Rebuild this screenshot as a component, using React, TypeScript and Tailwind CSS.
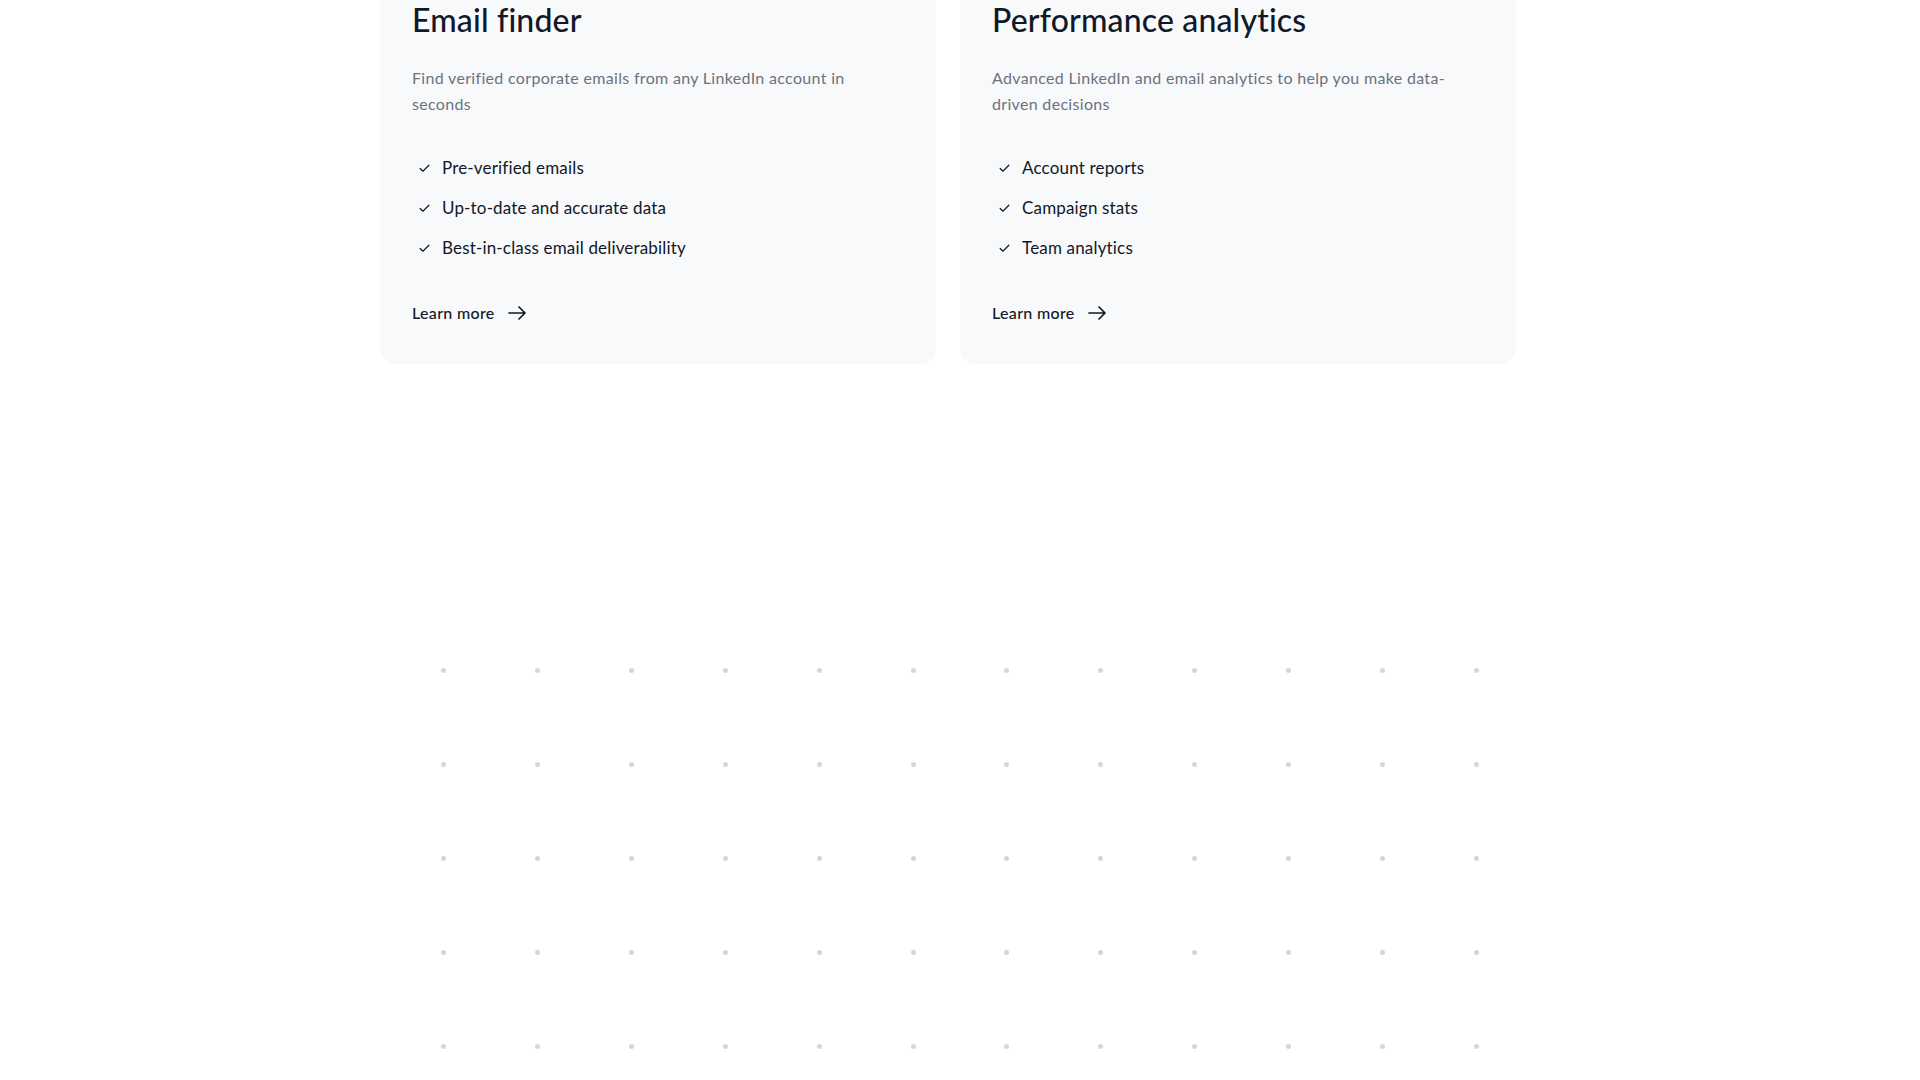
import { Check } from "lucide-react";

interface IFeature {
  title: string;
  description: string;
  items: string[];
}

const features: IFeature[] = [
  {
    title: "Email finder",
    description:
      "Find verified corporate emails from any LinkedIn account in seconds",
    items: [
      "Pre-verified emails",
      "Up-to-date and accurate data",
      "Best-in-class email deliverability",
    ],
  },
  {
    title: "Performance analytics",
    description:
      "Advanced LinkedIn and email analytics to help you make data-driven decisions",
    items: ["Account reports", "Campaign stats", "Team analytics"],
  },
];

const ArrowIcon = () => (
  <svg width="19" height="14" viewBox="0 0 19 14" fill="none">
    <path
      d="M1 7h16M11 1l6 6-6 6"
      stroke="currentColor"
      strokeWidth="1.7"
      strokeLinecap="round"
      strokeLinejoin="round"
    />
  </svg>
);

const FeatureCard = ({ feature }: { feature: IFeature }) => {
  return (
    <div className="bg-[#f8f9fb] rounded-b-2xl px-8 pb-[39px]">
      <h3 className="pt-[2px] text-[32px] leading-[36px] font-medium text-[#111827] tracking-[0.005em]">
        {feature.title}
      </h3>
      <p className="mt-[27px] max-w-[470px] text-[16px] leading-[26px] tracking-[0.02em] text-[#6b7280]">
        {feature.description}
      </p>
      <ul className="mt-[39px] flex flex-col gap-4">
        {feature.items.map((item) => (
          <li
            key={item}
            className="flex items-center gap-[11px] text-[17px] leading-6 tracking-[0.01em] text-[#111827]"
          >
            <Check size={13} strokeWidth={2.2} className="ml-[6px] text-[#111827]" />
            {item}
          </li>
        ))}
      </ul>
      <a
        href="#"
        className="mt-[41px] inline-flex items-center gap-[13px] text-[16px] leading-6 font-medium tracking-[0.02em] text-[#111827]"
      >
        Learn more
        <ArrowIcon />
      </a>
    </div>
  );
};

const DotGrid = () => {
  const dots = Array.from({ length: 12 * 6 });
  return (
    <div className="mx-auto mt-[260px] grid w-[1126px] grid-cols-12">
      {dots.map((_, i) => (
        <div key={i} className="flex h-[93.8px] items-center justify-center">
          <span className="block h-[5px] w-[5px] rounded-full bg-[#d3d6de]" />
        </div>
      ))}
    </div>
  );
};

export default function App() {
  return (
    <div
      className="min-h-screen bg-white"
      style={{ fontFamily: "Lato, 'Noto Sans', sans-serif" }}
    >
      <div className="mx-auto max-w-[1160px] pr-6">
        <div className="grid grid-cols-2 gap-6">
          {features.map((feature) => (
            <FeatureCard key={feature.title} feature={feature} />
          ))}
        </div>
      </div>
      <DotGrid />
    </div>
  );
}
